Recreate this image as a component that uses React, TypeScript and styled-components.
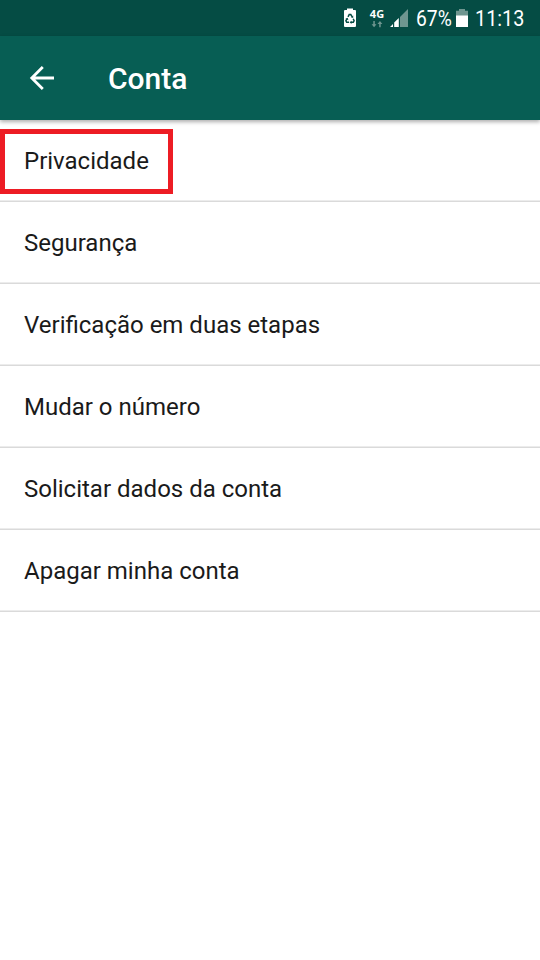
import React from "react";
import styled, { createGlobalStyle } from "styled-components";

const GlobalStyle = createGlobalStyle`
  * { box-sizing: border-box; }
  body { margin: 0; background: #fff; }
`;

const Screen = styled.div`
  width: 540px;
  height: 960px;
  background: #fff;
  overflow: hidden;
  font-family: Roboto, sans-serif;
`;

const StatusBar = styled.div`
  height: 36px;
  padding-left: 343px;
  display: flex;
  align-items: center;
  background: #054c44;
  color: #fff;
`;

const StatusText = styled.span<{ $width: number; $scale: number }>`
  flex: none;
  width: ${(p) => p.$width}px;
  padding-top: 1px;
  font-size: 22px;
  line-height: 36px;
  white-space: nowrap;
  transform: scaleX(${(p) => p.$scale});
  transform-origin: left center;
`;

const Icon = styled.svg<{ $gap?: number }>`
  display: block;
  flex: none;
  margin-right: ${(p) => p.$gap ?? 0}px;
`;

const Network = styled.div`
  flex: none;
  width: 16px;
  height: 36px;
  margin: 0 5px 0 12px;
  padding-top: 8px;
  display: flex;
  flex-direction: column;
  align-items: center;
  gap: 2px;
  font: 700 11px/11px "Open Sans", sans-serif;
`;

const Toolbar = styled.header`
  position: relative;
  height: 84px;
  padding: 0 28px;
  display: flex;
  align-items: center;
  gap: 52px;
  background: #075e54;
  color: #fff;
  box-shadow: 0 2px 4px rgba(0, 0, 0, 0.32);
`;

const Title = styled.h1`
  margin: 0;
  padding-top: 1px;
  font-size: 30px;
  font-weight: 500;
`;

const List = styled.ul`
  margin: 0;
  padding: 0;
  list-style: none;
`;

const Row = styled.li`
  position: relative;
  height: 82px;
  padding: 1px 24px 0;
  display: flex;
  align-items: center;
  border-bottom: 1px solid #dadada;
  box-shadow: inset 0 -1px #ececec;
  color: #1a1a1a;
  font-size: 24px;
`;

const Highlight = styled.div`
  position: absolute;
  left: 0;
  top: 9px;
  width: 173px;
  height: 65px;
  border: 5px solid #ed1c24;
`;

const items = [
  "Privacidade",
  "Segurança",
  "Verificação em duas etapas",
  "Mudar o número",
  "Solicitar dados da conta",
  "Apagar minha conta",
];

function RecycleBattery() {
  return (
    <Icon width="14" height="36" viewBox="0 0 14 36">
      <path d="M4 8.5h6V10h2q1 0 1 1v15q0 1-1 1H2q-1 0-1-1V11q0-1 1-1h2z" fill="#fff" />
      <g fill="none" stroke="#054c44" strokeWidth="1.5">
        <path d="M5 16.8L6.2 14.6H7.8L9 16.6" />
        <path d="M10.2 18.8L11.1 20.8L10.3 22.3H8" />
        <path d="M6 22.3H3.7L2.9 20.8L3.9 18.8" />
      </g>
      <path d="M10.2 15.4v2.5L7.8 17.2zM8.5 20.7v3.2L6.6 22.3zM2.4 18.8l2.3-1 .7 2.4z" fill="#054c44" />
    </Icon>
  );
}

function DataArrows() {
  return (
    <Icon width="12" height="7" viewBox="0 0 12 7">
      <path
        d="M2.3 0h1.5v3.2h1.7L3.05 6.2.6 3.2h1.7zM8.2 6.2h1.5V3h1.7L8.95 0 6.5 3h1.7z"
        fill="#6f9690"
      />
    </Icon>
  );
}

function Signal() {
  return (
    <Icon width="18" height="36" viewBox="0 0 18 36" $gap={8}>
      <path d="M18 9V27H10V17z" fill="#6f9690" />
      <path d="M0 27L3 24V27zM4.2 27V22.5L8.8 18V27z" fill="#fff" />
    </Icon>
  );
}

function Battery() {
  return (
    <Icon width="12" height="36" viewBox="0 0 12 36" $gap={7}>
      <path d="M3 9h6v1.7h3V16H0v-5.3h3z" fill="#6f9690" />
      <path d="M0 15.5h12V27H0z" fill="#fff" />
    </Icon>
  );
}

export default function App() {
  return (
    <Screen>
      <GlobalStyle />
      <StatusBar>
        <RecycleBattery />
        <Network>
          4G
          <DataArrows />
        </Network>
        <Signal />
        <StatusText $width={40} $scale={0.875}>67%</StatusText>
        <Battery />
        <StatusText $width={50} $scale={0.9}>11:13</StatusText>
      </StatusBar>
      <Toolbar>
        <Icon width="28" height="28" viewBox="0 0 28 28">
          <path d="M26 14H4M14.8 3L3.8 14L14.8 25" fill="none" stroke="#fff" strokeWidth="2.8" />
        </Icon>
        <Title>Conta</Title>
      </Toolbar>
      <List>
        {items.map((item, i) => (
          <Row key={item}>
            {item}
            {i === 0 && <Highlight />}
          </Row>
        ))}
      </List>
    </Screen>
  );
}
